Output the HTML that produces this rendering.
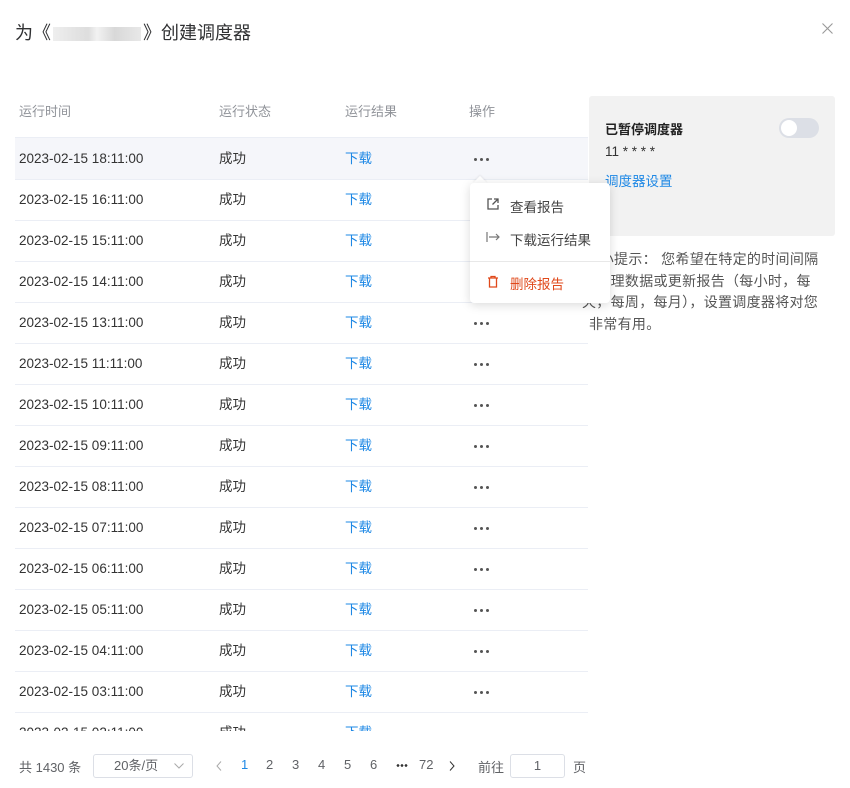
<!DOCTYPE html>
<html><head><meta charset="utf-8"><style>
*{margin:0;padding:0;box-sizing:border-box}
body{width:850px;height:788px;background:#fff;font-family:"Liberation Sans","Noto Sans CJK SC",sans-serif;position:relative;overflow:hidden;color:#333}
.abs{position:absolute}
.title{left:15px;top:19px;font-size:18px;color:#303133}
.blur{display:inline-block;width:88px;height:14px;background:linear-gradient(90deg,#eee,#ddd 40%,#f2f2f2 50%,#d8d8d8 70%,#e8e8e8);vertical-align:middle;margin:0 2px}
.th{top:101px;font-size:13px;color:#909399}
.hline{left:15px;width:573px;height:1px;background:#ebeef5}
.row{left:0;width:573px;height:41px;font-size:13.5px;color:#333;line-height:41px}
.row span{position:absolute;top:0}
.dl{color:#1e88e5}
.dots{color:#555}
.dots i{display:inline-block;width:3px;height:3px;border-radius:50%;background:#555;margin-right:3px;vertical-align:middle}
.panel{left:589px;top:96px;width:246px;height:140px;background:#f2f2f2;border-radius:3px}
.pop{left:470px;top:183px;width:140px;height:120px;background:#fff;border-radius:4px;box-shadow:0 2px 10px rgba(0,0,0,.15);font-size:13.5px}
.pop div{position:absolute;left:40px}
.foot{top:757px;font-size:13px;color:#606266}
</style></head><body>
<div class="abs title">为《<span class="blur"></span>》创建调度器</div>
<svg class="abs" style="left:822px;top:23px" width="11" height="11" viewBox="0 0 11 11" stroke="#999" stroke-width="1.1"><path d="M0.5 0.5l10 10M10.5 0.5l-10 10"/></svg>
<div class="abs th" style="left:19px">运行时间</div>
<div class="abs th" style="left:219px">运行状态</div>
<div class="abs th" style="left:345px">运行结果</div>
<div class="abs th" style="left:469px">操作</div>
<div class="abs hline" style="top:137px"></div>
<div class="abs" style="left:15px;top:138px;width:573px;height:41px;background:#f5f6fa"></div>
<div class="abs" style="left:15px;top:138px;width:573px;height:593px;overflow:hidden">
<div style="position:relative">
<script>
var h=['18','16','15','14','13','11','10','09','08','07','06','05','04','03','02'];
for(var i=0;i<h.length;i++){document.write('<div class="row abs" style="top:'+(i*41)+'px"><span style="left:4px">2023-02-15 '+h[i]+':11:00</span><span style="left:204px">成功</span><span class="dl" style="left:330px">下载</span>'+((i<1||i>3)?'<span class="dots" style="left:459px"><i></i><i></i><i></i></span>':'')+'</div><div class="abs hline" style="left:0;top:'+(i*41+41)+'px"></div>');}
</script>
</div></div>
<div class="abs panel">
<div class="abs" style="left:16px;top:23px;font-size:13px;font-weight:bold;color:#222">已暂停调度器</div>
<div class="abs" style="left:190px;top:22px;width:40px;height:20px;border-radius:10px;background:#dcdfe6"><div style="position:absolute;left:2px;top:2px;width:16px;height:16px;border-radius:50%;background:#fff"></div></div>
<div class="abs" style="left:16px;top:48px;font-size:13.5px;color:#333">11 * * * *</div>
<div class="abs" style="left:16px;top:74px;font-size:13.5px;color:#1e88e5">调度器设置</div>
</div>
<div class="abs" style="left:582px;top:249px;width:268px;font-size:14px;letter-spacing:0.3px;line-height:21.5px;color:#555;white-space:nowrap">💡小提示： 您希望在特定的时间间隔<br>在处理数据或更新报告（每小时，每<br>天，每周，每月），设置调度器将对您<br>&#8203;<span style="margin-left:7px">非常有用。</span></div>
<div class="abs" style="left:475px;top:178px;width:10px;height:10px;background:#fff;transform:rotate(45deg);box-shadow:-1px -1px 2px rgba(0,0,0,.06)"></div>
<div class="abs pop">
<svg class="abs" style="left:16px;top:14px" width="14" height="14" viewBox="0 0 14 14" fill="none" stroke="#555" stroke-width="1.3"><path d="M6 2H2v10h10V8M8 2h4v4M12 2L6.5 7.5"/></svg>
<div style="top:13px;color:#444">查看报告</div>
<svg class="abs" style="left:16px;top:48px" width="14" height="12" viewBox="0 0 14 12" fill="none" stroke="#777" stroke-width="1.2"><path d="M1 1v10M3 6h10M10 3l3 3-3 3"/></svg>
<div style="top:46px;color:#444">下载运行结果</div>
<div style="left:0;top:78px;width:140px;height:1px;background:#e8e8e8"></div>
<svg class="abs" style="left:17px;top:92px" width="12" height="13" viewBox="0 0 12 13" fill="none" stroke="#e0491b" stroke-width="1.3"><path d="M1 3h10M4 3V1.5h4V3M2.5 3v9h7V3"/></svg>
<div style="top:90px;color:#e0491b">删除报告</div>
</div>
<div class="abs foot" style="left:19px">共 1430 条</div>
<div class="abs" style="left:93px;top:754px;width:100px;height:24px;border:1px solid #dcdfe6;border-radius:3px;font-size:13px;color:#606266;line-height:22px;padding-left:20px">20条/页<svg style="position:absolute;right:8px;top:8px" width="10" height="6" viewBox="0 0 10 6" fill="none" stroke="#aaa"><path d="M0.5 0.5l4.5 4.5 4.5-4.5"/></svg></div>
<svg class="abs" style="left:216px;top:761px" width="6" height="10" viewBox="0 0 6 10" fill="none" stroke="#aaa"><path d="M5 0.5L1 5l4 4.5"/></svg>
<div class="abs foot" style="left:241px;color:#1e88e5">1</div>
<div class="abs foot" style="left:266px">2</div>
<div class="abs foot" style="left:292px">3</div>
<div class="abs foot" style="left:318px">4</div>
<div class="abs foot" style="left:344px">5</div>
<div class="abs foot" style="left:370px">6</div>
<div class="abs" style="left:396px;top:764px;width:12px;height:3px;background:radial-gradient(circle,#333 1.2px,transparent 1.5px) 0 0/4px 3px"></div>
<div class="abs foot" style="left:419px">72</div>
<svg class="abs" style="left:449px;top:761px" width="6" height="10" viewBox="0 0 6 10" fill="none" stroke="#333"><path d="M1 0.5L5 5 1 9.5"/></svg>
<div class="abs foot" style="left:478px">前往</div>
<div class="abs" style="left:510px;top:754px;width:55px;height:24px;border:1px solid #dcdfe6;border-radius:3px;font-size:13px;color:#606266;text-align:center;line-height:22px">1</div>
<div class="abs foot" style="left:573px">页</div>
</body></html>
